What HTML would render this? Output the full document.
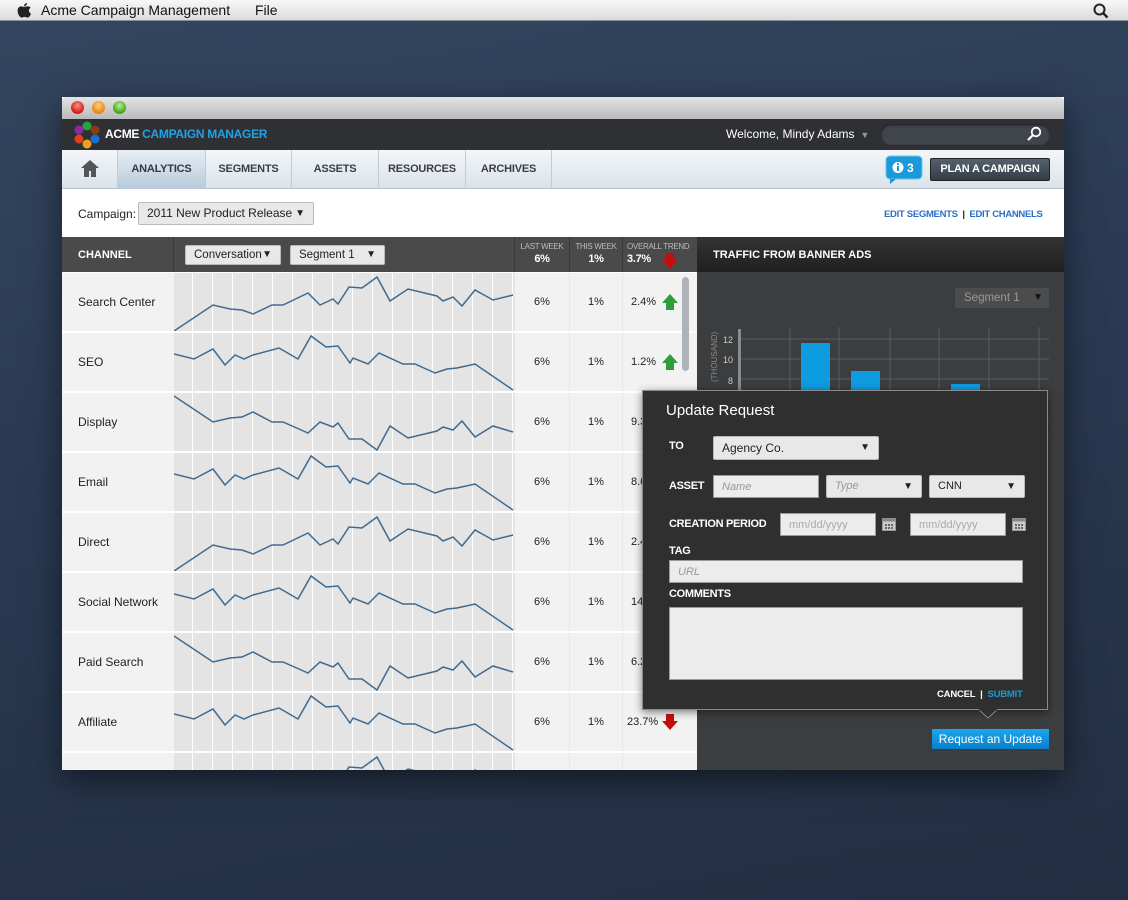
<!DOCTYPE html>
<html><head><meta charset="utf-8"><style>
*{margin:0;padding:0;box-sizing:border-box}
body{width:1128px;height:900px;overflow:hidden;position:relative;font-family:"Liberation Sans",sans-serif;background:linear-gradient(170deg,#34465f 0%,#2b3b54 40%,#222e42 100%)}
.a{position:absolute}
.menubar{left:0;top:0;width:1128px;height:21px;background:linear-gradient(#f7f7f7,#dcdcdc);border-bottom:1px solid #8a8f99;font-size:14px;color:#111}
.win{left:62px;top:97px;width:1002px;height:673px;background:#fff;box-shadow:0 10px 30px rgba(0,0,0,.5)}
.nav div.t{position:absolute;top:0;height:39px;line-height:39px;text-align:center;font-size:11px;font-weight:bold;color:#3b3f45;border-right:1px solid #c2ccd5;letter-spacing:-.2px}
.sel{position:absolute;background:#e8e8e8;border:1px solid #bbb;font-size:12px;color:#222;padding-left:8px;border-radius:2px}
.sel b{position:absolute;right:8px;top:0;font-size:10px}
.row{position:absolute;left:0;width:634px;height:60px;border-bottom:2px solid #fff}
.lab{position:absolute;left:0;top:0;width:112px;height:58px;background:#f2f2f2;font-size:12px;color:#222;line-height:58px;padding-left:16px}
.num{position:absolute;top:0;height:58px;line-height:58px;background:#f2f2f2;font-size:11px;color:#222;text-align:center;border-left:1px solid #e6e6e6}
.dl{position:absolute;font-size:11px;font-weight:bold;color:#fff;letter-spacing:-.3px}
.in{position:absolute;background:#ececec;border:1px solid #999;font-size:11px;color:#999;font-style:italic;padding-left:8px;line-height:22px}
</style></head><body>
<div class="a menubar">
 <svg class="a" style="left:17px;top:2px" width="15" height="17" viewBox="0 0 15 17"><path d="M10 1c0 2-1.5 3.3-3 3.3C7 2.5 8.5 1 10 1zM7.5 5c1 0 2-.8 3.2-.8 1 0 2.2.6 2.9 1.6-2.5 1.4-2 4.9.4 5.8-.6 1.7-1.8 4-3.3 4-1.2 0-1.6-.7-3-.7s-1.9.7-3 .7C3 15.6.6 12 .6 8.7.6 6 2.3 4.4 4.1 4.4 5.4 4.4 6.4 5 7.5 5z" fill="#222"/></svg>
 <span class="a" style="left:41px;top:2px">Acme Campaign Management</span>
 <span class="a" style="left:255px;top:2px">File</span>
 <svg class="a" style="left:1093px;top:3px" width="16" height="16"><circle cx="6.5" cy="6.5" r="5" fill="none" stroke="#222" stroke-width="2"/><path d="M10 10l4.5 4.5" stroke="#222" stroke-width="2.5"/></svg>
</div>

<div class="a win">
 <div class="a" style="left:0;top:0;width:1002px;height:22px;background:linear-gradient(#e4e4e4,#b9b9b9);border-radius:4px 4px 0 0"></div>
 <div class="a" style="left:9px;top:4px;width:13px;height:13px;border-radius:50%;background:radial-gradient(circle at 50% 35%,#ff8a80,#d21a12 70%)"></div>
 <div class="a" style="left:30px;top:4px;width:13px;height:13px;border-radius:50%;background:radial-gradient(circle at 50% 35%,#ffd080,#e8850c 70%)"></div>
 <div class="a" style="left:51px;top:4px;width:13px;height:13px;border-radius:50%;background:radial-gradient(circle at 50% 35%,#b8f090,#3ea51c 70%)"></div>
 <div class="a" style="left:0;top:22px;width:1002px;height:31px;background:#2e3034"></div>
 <svg class="a" style="left:11px;top:24px" width="28" height="28" viewBox="0 0 28 28">
  <circle cx="14" cy="5" r="4.5" fill="#2aa13a"/><circle cx="22" cy="9" r="4.5" fill="#8a3b12"/><circle cx="22" cy="18" r="4.5" fill="#1a6fd0"/><circle cx="14" cy="23" r="4.5" fill="#f0a020"/><circle cx="6" cy="18" r="4.5" fill="#e0401a"/><circle cx="6" cy="9" r="4.5" fill="#8a2aa0"/>
 </svg>
 <div class="a" style="left:43px;top:30px;font-size:12px;font-weight:bold;color:#fff;letter-spacing:-.3px">ACME <span style="color:#1fa3e6">CAMPAIGN MANAGER</span></div>
 <div class="a" style="left:664px;top:30px;font-size:12px;color:#fff">Welcome, Mindy Adams <span style="color:#999;font-size:9px">&nbsp;▼</span></div>
 <div class="a" style="left:819px;top:27px;width:169px;height:21px;border-radius:10px;background:#40444b;box-shadow:inset 0 1px 2px #1a1a1a"></div>
 <svg class="a" style="left:964px;top:29px" width="16" height="16"><circle cx="10" cy="6" r="4.3" fill="none" stroke="#fff" stroke-width="1.8"/><path d="M7 9l-5 5" stroke="#fff" stroke-width="2.2"/></svg>
 <div class="a nav" style="left:0;top:53px;width:1002px;height:39px;background:linear-gradient(#f3f6f9,#dbe3ea);border-bottom:1px solid #b8c2cc">
  <div class="t" style="left:0;width:56px"><svg style="margin-top:9px" width="20" height="19" viewBox="0 0 20 19"><path d="M10 1L1 9h3v9h5v-6h2v6h5V9h3z" fill="#555"/></svg></div>
  <div class="t" style="left:56px;width:88px;background:linear-gradient(#e8eef3,#b7cadb);color:#2f3a45">ANALYTICS</div>
  <div class="t" style="left:144px;width:86px">SEGMENTS</div>
  <div class="t" style="left:230px;width:87px">ASSETS</div>
  <div class="t" style="left:317px;width:87px">RESOURCES</div>
  <div class="t" style="left:404px;width:86px">ARCHIVES</div>
 </div>
 <svg class="a" style="left:823px;top:58px" width="38" height="30"><rect x="1" y="1" width="36" height="23" rx="4" fill="#1a9ad8" stroke="#6cc6f0"/><path d="M5 24l0 5 6-5z" fill="#1a9ad8"/><circle cx="13" cy="12.5" r="5.5" fill="#fff"/><rect x="12" y="11" width="2" height="5" fill="#1a9ad8"/><circle cx="13" cy="9" r="1.1" fill="#1a9ad8"/><text x="22" y="17" font-size="12" font-weight="bold" fill="#fff" font-family="Liberation Sans">3</text></svg>
 <div class="a" style="left:868px;top:61px;width:120px;height:23px;background:linear-gradient(#56616c,#343d46);border:1px solid #222;border-radius:2px;color:#fff;font-size:11px;font-weight:bold;text-align:center;line-height:21px;letter-spacing:-.2px">PLAN A CAMPAIGN</div>
 <div class="a" style="left:16px;top:110px;font-size:12px;color:#222">Campaign:</div>
 <div class="sel" style="left:76px;top:105px;width:176px;height:23px;line-height:21px">2011 New Product Release<b>▼</b></div>
 <div class="a" style="left:822px;top:112px;font-size:9.5px;font-weight:bold;color:#2a6fc7;letter-spacing:-.3px">EDIT SEGMENTS &nbsp;<span style="color:#222">|</span>&nbsp; EDIT CHANNELS</div>
 <div class="a" style="left:0;top:140px;width:635px;height:35px;background:#4a4a4a"></div>
 <div class="a" style="left:16px;top:152px;font-size:11px;font-weight:bold;color:#fff">CHANNEL</div>
 <div class="a" style="left:111px;top:140px;width:1px;height:35px;background:#3a3a3a"></div>
 <div class="sel" style="left:123px;top:148px;width:96px;height:20px;line-height:18px;font-size:11.5px">Conversation<b>▼</b></div>
 <div class="sel" style="left:228px;top:148px;width:95px;height:20px;line-height:18px;font-size:11.5px">Segment 1<b>▼</b></div>
 <div class="a" style="left:452px;top:140px;width:55px;height:35px;border-left:1px solid #3a3a3a;text-align:center;color:#bbb;font-size:8px;padding-top:5px;letter-spacing:-.3px">LAST WEEK<div style="color:#fff;font-size:11px;font-weight:bold;margin-top:2px">6%</div></div>
 <div class="a" style="left:507px;top:140px;width:53px;height:35px;border-left:1px solid #3a3a3a;text-align:center;color:#bbb;font-size:8px;padding-top:5px;letter-spacing:-.3px">THIS WEEK<div style="color:#fff;font-size:11px;font-weight:bold;margin-top:2px">1%</div></div>
 <div class="a" style="left:560px;top:140px;width:75px;height:35px;border-left:1px solid #3a3a3a;text-align:left;color:#bbb;font-size:8px;padding:5px 0 0 4px;letter-spacing:-.3px">OVERALL TREND<div style="color:#fff;font-size:11px;font-weight:bold;margin-top:2px">3.7%</div></div>
 <svg class="a" style="left:599px;top:155px" width="18" height="18"><path d="M5 1h8v7h4l-8 9-8-9h4z" fill="#c40d0d"/></svg>

 <svg width="0" height="0" class="a"><defs>
  <pattern id="g" width="20" height="60" patternUnits="userSpaceOnUse" x="-1"><rect width="20" height="60" fill="#e4e4e4"/><rect x="19" width="1.5" height="60" fill="#fff"/></pattern>
 </defs></svg>
 <div class="a" style="left:0;top:176px;width:635px;height:497px;overflow:hidden;background:#fff">
  <div class="row" style="top:0"><div class="lab">Search Center</div><svg class="a" style="left:112px;top:0" width="340" height="58"><rect width="340" height="58" fill="url(#g)"/><polyline fill="none" stroke="#3f6a8e" stroke-width="1.5" points="0,58 39,32 56,36 68,37 79,41 98,32 109,32 134,20 146,32 159,26 164,31 175,14 188,15 203,4 216,28 234,16 263,23 269,28 279,24 288,33 301,17 319,27 339,22"/></svg><div class="num" style="left:452px;width:55px">6%</div><div class="num" style="left:507px;width:53px">1%</div><div class="num" style="left:560px;width:75px;text-align:left;padding-left:8px">2.4%</div><svg class="a" style="left:598px;top:20px" width="20" height="18"><path d="M10 1l8 9h-4v7H6v-7H2z" fill="#2f9e3a"/></svg></div>
  <div class="row" style="top:60px"><div class="lab">SEO</div><svg class="a" style="left:112px;top:0" width="340" height="58"><rect width="340" height="58" fill="url(#g)"/><polyline fill="none" stroke="#3f6a8e" stroke-width="1.5" points="0,21 20,26 39,16 51,32 61,22 70,26 79,22 105,15 124,26 137,3 152,14 164,13 176,30 179,25 194,31 205,20 229,31 241,31 261,40 273,36 283,35 301,31 339,57"/></svg><div class="num" style="left:452px;width:55px">6%</div><div class="num" style="left:507px;width:53px">1%</div><div class="num" style="left:560px;width:75px;text-align:left;padding-left:8px">1.2%</div><svg class="a" style="left:598px;top:20px" width="20" height="18"><path d="M10 1l8 9h-4v7H6v-7H2z" fill="#2f9e3a"/></svg></div>
  <div class="row" style="top:120px"><div class="lab">Display</div><svg class="a" style="left:112px;top:0" width="340" height="58"><rect width="340" height="58" fill="url(#g)"/><polyline fill="none" stroke="#3f6a8e" stroke-width="1.5" points="0,3 39,29 56,25 68,24 79,19 98,29 109,29 134,40 146,29 159,34 164,30 175,46 188,46 203,57 216,33 234,45 263,38 269,34 279,37 288,28 301,44 319,33 339,39"/></svg><div class="num" style="left:452px;width:55px">6%</div><div class="num" style="left:507px;width:53px">1%</div><div class="num" style="left:560px;width:75px;text-align:left;padding-left:8px">9.3%</div></div>
  <div class="row" style="top:180px"><div class="lab">Email</div><svg class="a" style="left:112px;top:0" width="340" height="58"><rect width="340" height="58" fill="url(#g)"/><polyline fill="none" stroke="#3f6a8e" stroke-width="1.5" points="0,21 20,26 39,16 51,32 61,22 70,26 79,22 105,15 124,26 137,3 152,14 164,13 176,30 179,25 194,31 205,20 229,31 241,31 261,40 273,36 283,35 301,31 339,57"/></svg><div class="num" style="left:452px;width:55px">6%</div><div class="num" style="left:507px;width:53px">1%</div><div class="num" style="left:560px;width:75px;text-align:left;padding-left:8px">8.6%</div></div>
  <div class="row" style="top:240px"><div class="lab">Direct</div><svg class="a" style="left:112px;top:0" width="340" height="58"><rect width="340" height="58" fill="url(#g)"/><polyline fill="none" stroke="#3f6a8e" stroke-width="1.5" points="0,58 39,32 56,36 68,37 79,41 98,32 109,32 134,20 146,32 159,26 164,31 175,14 188,15 203,4 216,28 234,16 263,23 269,28 279,24 288,33 301,17 319,27 339,22"/></svg><div class="num" style="left:452px;width:55px">6%</div><div class="num" style="left:507px;width:53px">1%</div><div class="num" style="left:560px;width:75px;text-align:left;padding-left:8px">2.4%</div></div>
  <div class="row" style="top:300px"><div class="lab">Social Network</div><svg class="a" style="left:112px;top:0" width="340" height="58"><rect width="340" height="58" fill="url(#g)"/><polyline fill="none" stroke="#3f6a8e" stroke-width="1.5" points="0,21 20,26 39,16 51,32 61,22 70,26 79,22 105,15 124,26 137,3 152,14 164,13 176,30 179,25 194,31 205,20 229,31 241,31 261,40 273,36 283,35 301,31 339,57"/></svg><div class="num" style="left:452px;width:55px">6%</div><div class="num" style="left:507px;width:53px">1%</div><div class="num" style="left:560px;width:75px;text-align:left;padding-left:8px">14.5%</div></div>
  <div class="row" style="top:360px"><div class="lab">Paid Search</div><svg class="a" style="left:112px;top:0" width="340" height="58"><rect width="340" height="58" fill="url(#g)"/><polyline fill="none" stroke="#3f6a8e" stroke-width="1.5" points="0,3 39,29 56,25 68,24 79,19 98,29 109,29 134,40 146,29 159,34 164,30 175,46 188,46 203,57 216,33 234,45 263,38 269,34 279,37 288,28 301,44 319,33 339,39"/></svg><div class="num" style="left:452px;width:55px">6%</div><div class="num" style="left:507px;width:53px">1%</div><div class="num" style="left:560px;width:75px;text-align:left;padding-left:8px">6.2%</div></div>
  <div class="row" style="top:420px"><div class="lab">Affiliate</div><svg class="a" style="left:112px;top:0" width="340" height="58"><rect width="340" height="58" fill="url(#g)"/><polyline fill="none" stroke="#3f6a8e" stroke-width="1.5" points="0,21 20,26 39,16 51,32 61,22 70,26 79,22 105,15 124,26 137,3 152,14 164,13 176,30 179,25 194,31 205,20 229,31 241,31 261,40 273,36 283,35 301,31 339,57"/></svg><div class="num" style="left:452px;width:55px">6%</div><div class="num" style="left:507px;width:53px">1%</div><div class="num" style="left:560px;width:75px;text-align:left;padding-left:4px">23.7%</div><svg class="a" style="left:598px;top:20px" width="20" height="18"><path d="M6 1h8v7h4l-8 9-8-9h4z" fill="#c40d0d"/></svg></div>
  <div class="row" style="top:480px"><div class="lab"></div><svg class="a" style="left:112px;top:0" width="340" height="58"><rect width="340" height="58" fill="url(#g)"/><polyline fill="none" stroke="#3f6a8e" stroke-width="1.5" points="0,58 39,32 56,36 68,37 79,41 98,32 109,32 134,20 146,32 159,26 164,31 175,14 188,15 203,4 216,28 234,16 263,23 269,28 279,24 288,33 301,17 319,27 339,22"/></svg><div class="num" style="left:452px;width:55px"></div><div class="num" style="left:507px;width:53px"></div><div class="num" style="left:560px;width:75px"></div></div>
  <div class="a" style="left:620px;top:4px;width:7px;height:94px;border-radius:4px;background:#aeb3ba"></div>
 </div>

 <div class="a" style="left:635px;top:140px;width:367px;height:533px;background:#3c3d3f"></div>
 <div class="a" style="left:635px;top:140px;width:367px;height:35px;background:linear-gradient(#333,#202020)"></div>
 <div class="a" style="left:651px;top:152px;font-size:11px;font-weight:bold;color:#fff">TRAFFIC FROM BANNER ADS</div>
 <div class="a" style="left:893px;top:191px;width:94px;height:20px;background:#4b4c4e;color:#9a9a9a;font-size:11.5px;line-height:20px;padding-left:9px">Segment 1<span style="position:absolute;right:6px;color:#111;font-size:10px">▼</span></div>
 <svg class="a" style="left:635px;top:225px" width="367" height="145">
  <g stroke="#5a5b5e" stroke-width="1"><line x1="43" y1="17" x2="352" y2="17"/><line x1="43" y1="37" x2="352" y2="37"/><line x1="43" y1="57" x2="352" y2="57"/><line x1="43" y1="77" x2="352" y2="77"/><line x1="43" y1="97" x2="352" y2="97"/><line x1="43" y1="117" x2="352" y2="117"/>
  <line x1="93" y1="5" x2="93" y2="140"/><line x1="142" y1="5" x2="142" y2="140"/><line x1="193" y1="5" x2="193" y2="140"/><line x1="242" y1="5" x2="242" y2="140"/><line x1="292" y1="5" x2="292" y2="140"/><line x1="342" y1="5" x2="342" y2="140"/></g>
  <rect x="41" y="7" width="3" height="130" fill="#8a8b8e"/>
  <text x="26" y="21" font-size="9" fill="#ccc" font-family="Liberation Sans">12</text><text x="26" y="41" font-size="9" fill="#ccc" font-family="Liberation Sans">10</text><text x="31" y="62" font-size="9" fill="#ccc" font-family="Liberation Sans">8</text>
  <text transform="translate(20,60) rotate(-90)" font-size="8" fill="#888" font-family="Liberation Sans">(THOUSAND)</text>
  <rect x="104" y="21" width="29" height="120" fill="#0e9be0"/><rect x="154" y="49" width="29" height="90" fill="#0e9be0"/><rect x="254" y="62" width="29" height="80" fill="#0e9be0"/>
 </svg>
 <div class="a" style="left:870px;top:632px;width:117px;height:20px;background:linear-gradient(#1ba6ec,#0a7fcc);color:#fff;font-size:12px;text-align:center;line-height:20px">Request an Update</div>

 <div class="a" style="left:580px;top:293px;width:406px;height:320px;background:#2f2f2f;border:1px solid #8a8a8a;box-shadow:0 2px 8px rgba(0,0,0,.5)"></div>
 <svg class="a" style="left:916px;top:612px" width="20" height="10"><path d="M0 0l10 9 10-9" fill="#2f2f2f" stroke="#8a8a8a"/><rect x="1" y="0" width="18" height="1.5" fill="#2f2f2f"/></svg>
 <div class="a" style="left:604px;top:305px;font-size:15px;color:#fff">Update Request</div>
 <div class="dl" style="left:607px;top:343px">TO</div>
 <div class="sel" style="left:651px;top:339px;width:166px;height:24px;line-height:22px;font-size:12px">Agency Co.<b>▼</b></div>
 <div class="dl" style="left:607px;top:383px">ASSET</div>
 <div class="in" style="left:651px;top:378px;width:106px;height:23px">Name</div>
 <div class="sel" style="left:764px;top:378px;width:96px;height:23px;line-height:21px;font-style:italic;color:#999;font-size:11px">Type<b style="color:#222;font-style:normal">▼</b></div>
 <div class="sel" style="left:867px;top:378px;width:96px;height:23px;line-height:21px;font-size:11px">CNN<b>▼</b></div>
 <div class="dl" style="left:607px;top:421px">CREATION PERIOD</div>
 <div class="in" style="left:718px;top:416px;width:96px;height:23px;font-style:normal;color:#aaa">mm/dd/yyyy</div>
 <svg class="a" style="left:820px;top:420px" width="14" height="14"><rect x=".5" y="1.5" width="13" height="12" fill="#ccc" stroke="#999"/><rect x=".5" y="1.5" width="13" height="3" fill="#888"/><g fill="#666"><rect x="3" y="7" width="2" height="2"/><rect x="6" y="7" width="2" height="2"/><rect x="9" y="7" width="2" height="2"/><rect x="3" y="10" width="2" height="2"/><rect x="6" y="10" width="2" height="2"/><rect x="9" y="10" width="2" height="2"/></g></svg>
 <div class="in" style="left:848px;top:416px;width:96px;height:23px;font-style:normal;color:#aaa">mm/dd/yyyy</div>
 <svg class="a" style="left:950px;top:420px" width="14" height="14"><rect x=".5" y="1.5" width="13" height="12" fill="#ccc" stroke="#999"/><rect x=".5" y="1.5" width="13" height="3" fill="#888"/><g fill="#666"><rect x="3" y="7" width="2" height="2"/><rect x="6" y="7" width="2" height="2"/><rect x="9" y="7" width="2" height="2"/><rect x="3" y="10" width="2" height="2"/><rect x="6" y="10" width="2" height="2"/><rect x="9" y="10" width="2" height="2"/></g></svg>
 <div class="dl" style="left:607px;top:448px">TAG</div>
 <div class="in" style="left:607px;top:463px;width:354px;height:23px">URL</div>
 <div class="dl" style="left:607px;top:491px">COMMENTS</div>
 <div class="in" style="left:607px;top:510px;width:354px;height:73px"></div>
 <div class="a" style="left:875px;top:592px;font-size:9.5px;font-weight:bold;color:#fff;letter-spacing:-.2px">CANCEL &nbsp;| &nbsp;<span style="color:#1a9ad8">SUBMIT</span></div>
</div>
</body></html>
